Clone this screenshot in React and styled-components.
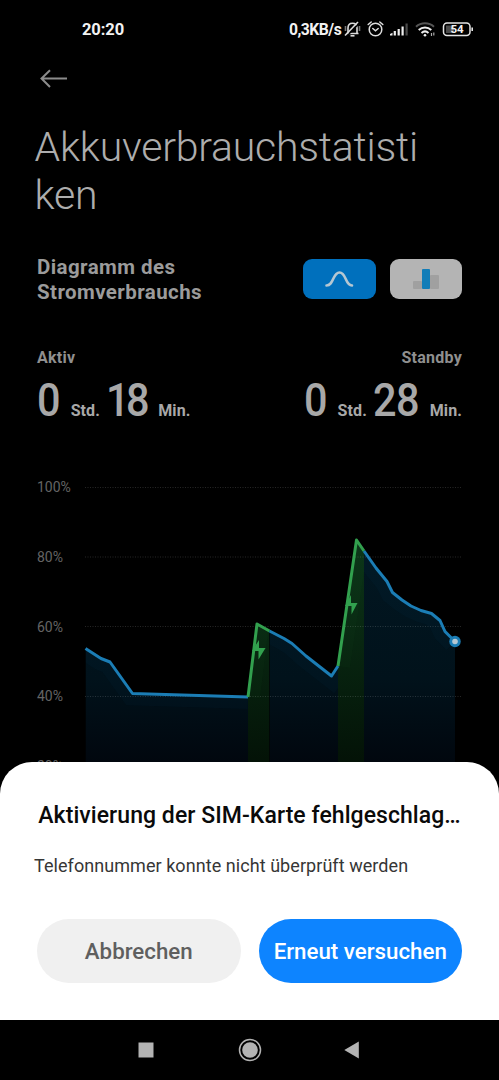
import styled, { createGlobalStyle } from 'styled-components';

const GlobalStyle = createGlobalStyle`
  * {
    box-sizing: border-box;
  }

  body {
    margin: 0;
    background: #000;
    font-family: Roboto, 'Noto Sans', sans-serif;
  }
`;

const Screen = styled.div`
  position: relative;
  display: flex;
  flex-direction: column;
  width: 499px;
  height: 1080px;
  overflow: hidden;
  background: #000;
`;

const StatusBar = styled.header`
  display: flex;
  flex-shrink: 0;
  justify-content: space-between;
  align-items: center;
  height: 58px;
  padding: 0 25px 0 82px;
  color: #f2f2f2;
`;

const Clock = styled.span`
  font-size: 16.5px;
  font-weight: 700;
  letter-spacing: -0.1px;
`;

const StatusIcons = styled.div`
  display: flex;
  align-items: center;
`;

const NetSpeed = styled.span`
  width: 54px;
  font-size: 15.7px;
  font-weight: 700;
  letter-spacing: -0.5px;
  white-space: nowrap;
`;

const Page = styled.main`
  flex: 1;
  min-height: 0;
  overflow: hidden;
  padding: 9px 37px 0;
`;

const BackButton = styled.button`
  display: block;
  height: 24px;
  padding: 0 0 0 2px;
  border: none;
  background: none;
`;

const PageTitle = styled.h1`
  width: 395px;
  margin: 33px 0 0 -2.5px;
  color: #adadad;
  font-size: 41px;
  font-weight: 300;
  line-height: 47.5px;
  letter-spacing: -0.23px;
  word-break: break-all;
`;

const ChartHeader = styled.div`
  display: flex;
  justify-content: space-between;
  align-items: center;
  margin-top: 36px;
`;

const ChartTitle = styled.h2`
  width: 200px;
  margin: 0;
  color: #9b9b9b;
  font-size: 20.5px;
  font-weight: 700;
  line-height: 25px;
  letter-spacing: 0.42px;
`;

const Toggle = styled.div`
  display: flex;
  gap: 14px;
  margin-top: -2px;
`;

const ToggleButton = styled.button`
  display: flex;
  justify-content: center;
  align-items: center;
  width: 72.5px;
  height: 40px;
  padding: 0;
  border: none;
  border-radius: 9px;
  background: ${({ $active }) => ($active ? '#0070bd' : '#b4b4b4')};
`;

const Stats = styled.div`
  display: flex;
  justify-content: space-between;
  margin-top: 42px;
`;

const Stat = styled.div`
  display: flex;
  flex-direction: column;
  align-items: ${({ $end }) => ($end ? 'flex-end' : 'flex-start')};
`;

const StatLabel = styled.span`
  color: #8f8f8f;
  font-size: 16px;
  font-weight: 700;
  line-height: 22px;
  letter-spacing: 0.25px;
`;

const Duration = styled.div`
  display: flex;
  align-items: baseline;
  height: 54px;
  margin-top: 4px;
  color: #a8a8a8;
  line-height: 54px;
`;

// digits are slightly condensed, the margin takes back the freed width
const Digits = styled.span`
  display: inline-block;
  margin-right: ${({ $count, $tight }) => ($tight ? -3 : $count > 1 ? -5 : -2.5)}px;
  font-size: 46px;
  font-weight: 500;
  letter-spacing: ${({ $tight }) => ($tight ? -3.8 : -0.5)}px;
  transform: scaleX(0.9);
  transform-origin: left;
`;

const Unit = styled.span`
  margin: 0 ${({ $last }) => ($last ? 0 : 6)}px 0 10.5px;
  font-size: 16px;
  font-weight: 700;
  letter-spacing: 0.1px;
`;

const Chart = styled.div`
  display: flex;
  margin-top: 53px;
`;

const Axis = styled.div`
  display: flex;
  flex-direction: column;
  width: 43px;
  margin-top: -1px;
  color: #646464;
  font-size: 14px;
`;

const Tick = styled.span`
  height: 69.75px;
  line-height: 16px;
`;

const Sheet = styled.section`
  position: absolute;
  right: 0;
  bottom: 60px;
  left: 0;
  height: 258.5px;
  padding: 37px 37px 0;
  border-radius: 32px 32px 0 0;
  background: #fff;
`;

const SheetTitle = styled.h3`
  margin: 0;
  color: #0a0a0a;
  font-size: 23px;
  font-weight: 500;
  line-height: 34px;
  letter-spacing: 0.06px;
  text-align: center;
  white-space: nowrap;
`;

const SheetText = styled.p`
  margin: 21px 0 0 -3px;
  color: #363636;
  font-size: 18px;
  line-height: 24px;
  letter-spacing: 0.06px;
  white-space: nowrap;
`;

const Actions = styled.div`
  display: flex;
  gap: 18px;
  margin-top: 41px;
`;

const ActionButton = styled.button`
  flex: 1;
  height: 64.5px;
  padding: 0;
  border: none;
  border-radius: 33px;
  background: ${({ $primary }) => ($primary ? '#0d84ff' : '#f0f0f0')};
  color: ${({ $primary }) => ($primary ? '#fff' : '#5f5f5f')};
  font-family: inherit;
  font-size: 22.3px;
  font-weight: 500;
  white-space: nowrap;
`;

const NavBar = styled.nav`
  display: flex;
  flex-shrink: 0;
  justify-content: center;
  align-items: center;
  gap: 80px;
  height: 60px;
  background: #000;
`;

const ticks = ['100%', '80%', '60%', '40%', '20%'];

// battery level over time, in chart units
const segments = [
  { color: 'blue', points: [[5.5, 168.5], [21, 178.5], [30, 182], [52.5, 213.5], [168, 217]] },
  { color: 'green', points: [[168, 217], [177, 144], [189.5, 151]] },
  { color: 'blue', points: [[189.5, 151], [204, 158.5], [212, 163.5], [226, 176], [251.5, 196], [258, 186]] },
  { color: 'green', points: [[258, 186], [276.5, 60], [284, 71]] },
  {
    color: 'blue',
    points: [[284, 71], [296, 88], [307, 101.5], [312.5, 112.5], [322, 120], [331, 126], [341, 130.5], [351.5, 133.5], [360, 140.5], [365, 151.5], [375, 161.5]],
  },
];

const strokes = { blue: '#1b7db5', green: '#32a04e' };
const toLine = (points) => points.map((p) => p.join(',')).join(' ');
const toArea = (points) =>
  `${points[0][0]},320 ${toLine(points)} ${points[points.length - 1][0]},320`;

function BatteryChart() {
  return (
    <svg width="382" height="320" viewBox="0 0 382 320" fill="none">
      <defs>
        <linearGradient id="blue" gradientUnits="userSpaceOnUse" x1="0" y1="60" x2="0" y2="290">
          <stop offset="0" stopColor="#021722" />
          <stop offset="0.6" stopColor="#01121b" />
          <stop offset="1" stopColor="#01060d" />
        </linearGradient>
        <linearGradient id="green" gradientUnits="userSpaceOnUse" x1="0" y1="60" x2="0" y2="290">
          <stop offset="0" stopColor="#0b3418" />
          <stop offset="0.45" stopColor="#082611" />
          <stop offset="1" stopColor="#031106" />
        </linearGradient>
        {segments.map((s, i) => (
          <clipPath id={`area${i}`} key={i}>
            <polygon points={toArea(s.points)} />
          </clipPath>
        ))}
      </defs>
      {segments.map((s, i) => (
        <g key={i} clipPath={`url(#area${i})`}>
          <polygon points={toArea(s.points)} fill={`url(#${s.color})`} />
          <polyline points={toLine(s.points)} stroke={strokes[s.color]} strokeOpacity="0.03" strokeWidth="24" />
        </g>
      ))}
      {[7.5, 77, 146.5, 216.5].map((y) => (
        <line key={y} x1="5" x2="382" y1={y} y2={y} stroke="#fff" strokeOpacity="0.15" strokeDasharray="1 1.5" />
      ))}
      {segments.map((s, i) => (
        <polyline
          key={i}
          points={toLine(s.points)}
          stroke={strokes[s.color]}
          strokeWidth="3"
          strokeLinejoin="round"
        />
      ))}
      <path d="M179 160v8h6.5l-7 11.5v-8.5h-6.5z" fill="#32a04e" />
      <path d="M271 115v8h6.5l-6 11.5v-8.5h-6.5z" fill="#32a04e" />
      <circle cx="375" cy="161.5" r="5.7" fill="#1b7db5" />
      <circle cx="375" cy="161.5" r="2.8" fill="#b5c7d2" />
    </svg>
  );
}

function DeviceIcons() {
  return (
    <svg width="131" height="22" viewBox="0 0 131 22" fill="none">
      {/* muted bell */}
      <g stroke="#dcdcdc" strokeWidth="1.6">
        <path d="M3.5 15.5H15.500M5 15.5V10c0-3 1.800-4.800 4.500-4.800S14 7 14 10v5.5" />
        <path d="M7.5 17.8h4" />
        <path d="M3.5 18.500L16.500 5" stroke="#000" strokeWidth="1.500" />
        <path d="M2 17.500L15 4" />
        <path d="M2.500 8v5M16.500 8v5" stroke="#777" />
      </g>
      {/* alarm */}
      <g stroke="#dedede" strokeWidth="1.5" strokeLinecap="round">
        <circle cx="32.5" cy="11.5" r="6.3" />
        <path d="M29.8 10.5l2.7 2.3 2.7-2.3M25.2 6.500l3-2.500M39.800 6.500l-3-2.500" />
      </g>
      {/* signal */}
      <path d="M47 17.5v-1.500l2.500-1.300v2.800zM50.700 17.500v-4.500h2.200v4.500zM54.600 17.500v-6.500h2.200v6.500zM58.500 17.500v-9h2.200v9z" fill="#eee" />
      <path d="M62.500 5.500h2.200v12h-2.200z" fill="#4a4a4a" />
      {/* wifi */}
      <g strokeWidth="2">
        <path d="M73 8.800a13.500 13.500 0 0 1 18 0" stroke="#555" />
        <path d="M75.700 12a9.500 9.500 0 0 1 12.600 0" stroke="#eee" />
        <path d="M78.500 14.900a5.400 5.400 0 0 1 7 0" stroke="#eee" />
      </g>
      <circle cx="82" cy="17.2" r="1.3" fill="#eee" />
      <path d="M88.500 15v3M90.800 14.500v3" stroke="#aaa" strokeWidth="1.2" />
      {/* battery */}
      <rect x="103" y="7.5" width="8" height="7.5" fill="#4b4b4b" />
      <rect x="100.5" y="5" width="26.5" height="12.5" rx="3.5" stroke="#e4e4e4" strokeWidth="1.5" />
      <path d="M129.2 9.500v3.500" stroke="#e4e4e4" strokeWidth="1.6" />
      <text x="114" y="15.3" fill="#f4f4f4" fontSize="11.5" fontWeight="700" textAnchor="middle">54</text>
    </svg>
  );
}

function TimeStat({ label, hours, minutes, end }) {
  return (
    <Stat $end={end}>
      <StatLabel>{label}</StatLabel>
      <Duration>
        <Digits $count={hours.length}>{hours}</Digits>
        <Unit>Std.</Unit>
        <Digits $count={minutes.length} $tight={minutes.startsWith('1')}>{minutes}</Digits>
        <Unit $last>Min.</Unit>
      </Duration>
    </Stat>
  );
}

function App() {
  return (
    <>
      <GlobalStyle />
      <Screen>
        <StatusBar>
          <Clock>20:20</Clock>
          <StatusIcons>
            <NetSpeed>0,3KB/s</NetSpeed>
            <DeviceIcons />
          </StatusIcons>
        </StatusBar>

        <Page>
          <BackButton aria-label="Zurück">
            <svg width="28" height="24" viewBox="0 0 28 24" fill="none" stroke="#8c8c8c" strokeWidth="2">
              <path d="M28 11.5H2.8M11 3.2L2.5 11.5l8.5 8.5" />
            </svg>
          </BackButton>
          <PageTitle>Akkuverbrauchstatistiken</PageTitle>

          <ChartHeader>
            <ChartTitle>Diagramm des Stromverbrauchs</ChartTitle>
            <Toggle>
              <ToggleButton $active>
                <svg width="30" height="20" viewBox="0 0 30 20" fill="none">
                  <path d="M2.5 16.5C10 16.5 8.5 3.5 15.500 3.500S21 16.500 28 16.500" stroke="#b5c7d2" strokeWidth="2.6" strokeLinecap="round" />
                </svg>
              </ToggleButton>
              <ToggleButton>
                <svg width="26" height="22" viewBox="0 0 26 22">
                  <rect x="0" y="13" width="9" height="8" rx="1" fill="#a0a0a0" />
                  <rect x="17" y="7" width="9" height="14" rx="1" fill="#a0a0a0" />
                  <rect x="9" y="1" width="8" height="20" rx="1" fill="#117db8" />
                </svg>
              </ToggleButton>
            </Toggle>
          </ChartHeader>

          <Stats>
            <TimeStat label="Aktiv" hours="0" minutes="18" />
            <TimeStat label="Standby" hours="0" minutes="28" end />
          </Stats>

          <Chart>
            <Axis>
              {ticks.map((tick) => (
                <Tick key={tick}>{tick}</Tick>
              ))}
            </Axis>
            <BatteryChart />
          </Chart>
        </Page>

        <Sheet>
          <SheetTitle>Aktivierung der SIM-Karte fehlgeschlag…</SheetTitle>
          <SheetText>Telefonnummer konnte nicht überprüft werden</SheetText>
          <Actions>
            <ActionButton>Abbrechen</ActionButton>
            <ActionButton $primary>Erneut versuchen</ActionButton>
          </Actions>
        </Sheet>

        <NavBar>
          <svg width="24" height="24" viewBox="0 0 24 24">
            <path d="M4.5 4.5h15v15h-15z" fill="#b3b3b3" />
          </svg>
          <svg width="24" height="24" viewBox="0 0 24 24" fill="none">
            <circle cx="12" cy="12" r="10.5" stroke="#b3b3b3" strokeWidth="1.5" />
            <circle cx="12" cy="12" r="7.8" fill="#b3b3b3" />
          </svg>
          <svg width="24" height="24" viewBox="0 0 24 24">
            <path d="M16.8 3.5v17L2.3 12z" fill="#b3b3b3" />
          </svg>
        </NavBar>
      </Screen>
    </>
  );
}

export default App;
